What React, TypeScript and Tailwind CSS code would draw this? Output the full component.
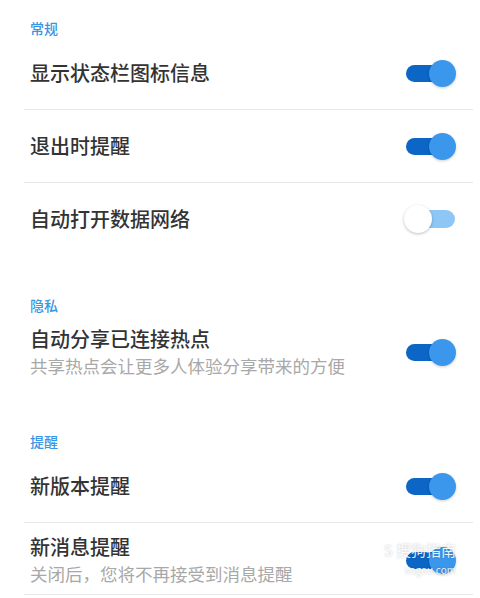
type ToggleProps = { on: boolean };

function Toggle({ on }: ToggleProps) {
  if (!on) {
    return (
      <div className="relative h-[28px] w-[52px] shrink-0">
        <div className="absolute left-[14px] top-[5px] h-[18px] w-[37px] rounded-full bg-[#8ec6f6]" />
        <div className="absolute left-0 top-0 h-[28px] w-[28px] rounded-full bg-white shadow-[0_1px_3px_rgba(0,0,0,0.25)]" />
      </div>
    );
  }
  return (
    <div className="relative h-[27px] w-[50px] shrink-0">
      <div className="absolute left-0 top-[5px] h-[17px] w-[44px] rounded-full bg-[#0b66c6]" />
      <div className="absolute right-0 top-0 h-[27px] w-[27px] rounded-full bg-[#3b97ec] shadow-[0_1px_3px_rgba(0,0,0,0.2)]" />
    </div>
  );
}

function Header({ label, pt }: { label: string; pt: string }) {
  return (
    <div className={`px-[30px] ${pt}`}>
      <p className="text-[14px] leading-[18px] font-medium text-[#3a96e4]">{label}</p>
    </div>
  );
}

function Divider() {
  return <div className="ml-6 mr-[7px] h-px bg-[#e8e8e8]" />;
}

function Row({ title, on }: { title: string; on: boolean }) {
  return (
    <div className="flex h-[72px] items-center justify-between pl-[30px] pr-6">
      <span className="text-[20px] leading-[26px] font-medium text-[#333333]">{title}</span>
      <Toggle on={on} />
    </div>
  );
}

function SubRow({
  title,
  sub,
  on,
  className,
  watermark,
}: {
  title: string;
  sub: string;
  on: boolean;
  className: string;
  watermark?: boolean;
}) {
  return (
    <div className={`flex items-center justify-between pl-[30px] pr-6 ${className}`}>
      <div className="flex flex-col">
        <span className="text-[20px] leading-[26px] font-medium text-[#333333]">{title}</span>
        <span className="mt-[2px] text-[17.5px] leading-[24px] text-[#a8a8a8]">{sub}</span>
      </div>
      <div className="relative">
        <Toggle on={on} />
        {watermark && (
          <div className="absolute right-0 -top-[6px] flex flex-col items-end gap-[6px] whitespace-nowrap text-white/90 [text-shadow:0_0_2px_rgba(0,0,0,0.25)]">
            <span className="text-[15px] leading-[17px]">S 搜狗指南</span>
            <span className="text-[10px] leading-[11px]">sogou.com</span>
          </div>
        )}
      </div>
    </div>
  );
}

export default function App() {
  return (
    <div
      className="h-[598px] w-[480px] overflow-hidden bg-white"
      style={{ fontFamily: '"Noto Sans CJK SC", "Noto Sans", sans-serif' }}
    >
      {/* 常规 */}
      <Header label="常规" pt="pt-[19px]" />
      <Row title="显示状态栏图标信息" on />
      <Divider />
      <Row title="退出时提醒" on />
      <Divider />
      <Row title="自动打开数据网络" on={false} />

      {/* 隐私 */}
      <Header label="隐私" pt="pt-[41px]" />
      <SubRow
        title="自动分享已连接热点"
        sub="共享热点会让更多人体验分享带来的方便"
        on
        className="pt-[12px]"
      />

      {/* 提醒 */}
      <Header label="提醒" pt="pt-[54px]" />
      <Row title="新版本提醒" on />
      <Divider />
      <SubRow
        title="新消息提醒"
        sub="关闭后，您将不再接受到消息提醒"
        on
        className="pt-[11px] pb-[8px]"
        watermark
      />
      <Divider />
    </div>
  );
}
